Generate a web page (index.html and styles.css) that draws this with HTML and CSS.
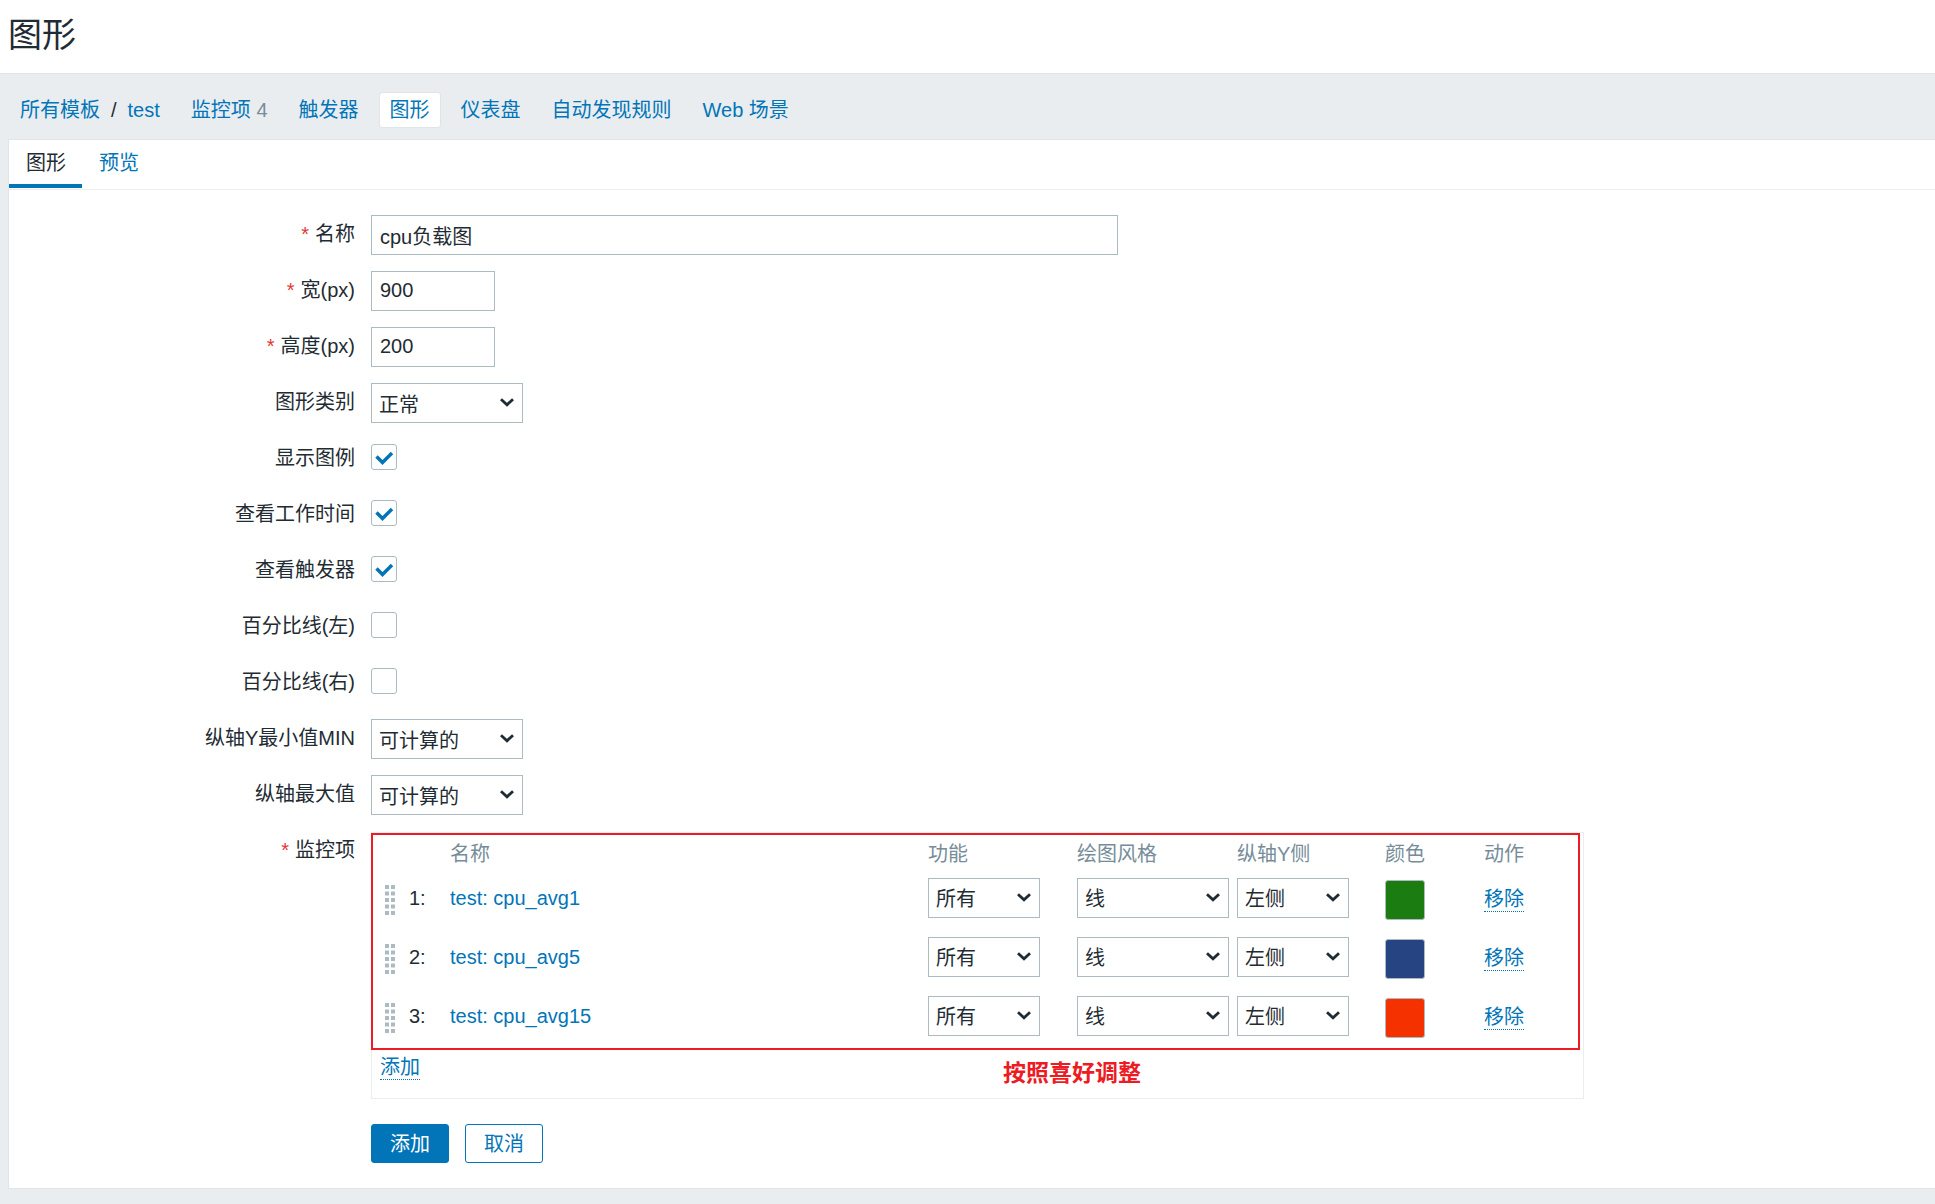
FILE: index.html
```html
<!DOCTYPE html>
<html lang="zh-CN">
<head>
<meta charset="utf-8">
<title>图形</title>
<link rel="stylesheet" href="styles.css">
</head>
<body>
<header class="page-header"><h1>图形</h1></header>

<nav class="object-nav" aria-label="模板">
  <div class="nav-item breadcrumb"><a href="#">所有模板</a><span>/</span><a href="#">test</a></div>
  <div class="nav-item"><a href="#">监控项</a> <span class="count">4</span></div>
  <div class="nav-item"><a href="#">触发器</a></div>
  <div class="nav-item selected"><a href="#" aria-current="page">图形</a></div>
  <div class="nav-item"><a href="#">仪表盘</a></div>
  <div class="nav-item"><a href="#">自动发现规则</a></div>
  <div class="nav-item"><a href="#">Web 场景</a></div>
</nav>

<main class="panel">
  <div class="tabs">
    <a class="tab active" href="#">图形</a>
    <a class="tab" href="#">预览</a>
  </div>

  <form class="graph-form">
    <div class="row"><label class="required" for="name">名称</label><input class="text wide" id="name" type="text" value="cpu负载图"></div>
    <div class="row"><label class="required" for="width">宽(px)</label><input class="text number" id="width" type="text" value="900"></div>
    <div class="row"><label class="required" for="height">高度(px)</label><input class="text number" id="height" type="text" value="200"></div>
    <div class="row"><label for="type">图形类别</label><select class="medium" id="type"><option>正常</option></select></div>
    <div class="row"><label for="legend">显示图例</label><input class="check" id="legend" type="checkbox" checked></div>
    <div class="row"><label for="worktime">查看工作时间</label><input class="check" id="worktime" type="checkbox" checked></div>
    <div class="row"><label for="triggers">查看触发器</label><input class="check" id="triggers" type="checkbox" checked></div>
    <div class="row"><label for="pleft">百分比线(左)</label><input class="check" id="pleft" type="checkbox"></div>
    <div class="row"><label for="pright">百分比线(右)</label><input class="check" id="pright" type="checkbox"></div>
    <div class="row"><label for="ymin">纵轴Y最小值MIN</label><select class="medium" id="ymin"><option>可计算的</option></select></div>
    <div class="row"><label for="ymax">纵轴最大值</label><select class="medium" id="ymax"><option>可计算的</option></select></div>
    <div class="row">
      <span class="label required">监控项</span>
      <div class="items">
        <table>
          <colgroup><col class="c-drag"><col class="c-num"><col><col class="c-func"><col class="c-style"><col class="c-side"><col class="c-color"><col class="c-action"></colgroup>
          <thead>
            <tr><th></th><th></th><th>名称</th><th>功能</th><th>绘图风格</th><th>纵轴Y侧</th><th>颜色</th><th>动作</th></tr>
          </thead>
          <tbody>
            <tr>
              <td class="drag"><svg width="10" height="30" viewBox="0 0 10 30"><path d="M2 0v30M8 0v30"/></svg></td>
              <td>1:</td><td><a href="#">test: cpu_avg1</a></td>
              <td><select class="small" aria-label="功能"><option>所有</option></select></td>
              <td><select class="medium" aria-label="绘图风格"><option>线</option></select></td>
              <td><select class="small" aria-label="纵轴Y侧"><option>左侧</option></select></td>
              <td class="color"><button type="button" class="swatch green" aria-label="颜色"></button></td>
              <td class="action"><button type="button" class="link">移除</button></td>
            </tr>
            <tr>
              <td class="drag"><svg width="10" height="30" viewBox="0 0 10 30"><path d="M2 0v30M8 0v30"/></svg></td>
              <td>2:</td><td><a href="#">test: cpu_avg5</a></td>
              <td><select class="small" aria-label="功能"><option>所有</option></select></td>
              <td><select class="medium" aria-label="绘图风格"><option>线</option></select></td>
              <td><select class="small" aria-label="纵轴Y侧"><option>左侧</option></select></td>
              <td class="color"><button type="button" class="swatch blue" aria-label="颜色"></button></td>
              <td class="action"><button type="button" class="link">移除</button></td>
            </tr>
            <tr>
              <td class="drag"><svg width="10" height="30" viewBox="0 0 10 30"><path d="M2 0v30M8 0v30"/></svg></td>
              <td>3:</td><td><a href="#">test: cpu_avg15</a></td>
              <td><select class="small" aria-label="功能"><option>所有</option></select></td>
              <td><select class="medium" aria-label="绘图风格"><option>线</option></select></td>
              <td><select class="small" aria-label="纵轴Y侧"><option>左侧</option></select></td>
              <td class="color"><button type="button" class="swatch red" aria-label="颜色"></button></td>
              <td class="action"><button type="button" class="link">移除</button></td>
            </tr>
          </tbody>
          <tfoot><tr><td colspan="8"><button type="button" class="link">添加</button></td></tr></tfoot>
        </table>
        <div class="highlight"></div>
        <p class="note">按照喜好调整</p>
      </div>
    </div>
    <div class="actions">
      <button type="submit" class="btn primary">添加</button>
      <button type="button" class="btn">取消</button>
    </div>
  </form>
</main>
</body>
</html>
```
FILE: styles.css
```css
* { box-sizing: border-box; }

body {
  margin: 0;
  background: #e9edf0;
  color: #1f2c33;
  font: 20px/28px "Liberation Sans", Arial, "Noto Sans CJK SC", sans-serif;
}

a { color: #0275b8; text-decoration: none; }

button, input, select { font: inherit; color: inherit; margin: 0; }

.page-header {
  padding: 10px 8px 13px;
  background: #fff;
  border-bottom: 1px solid #dfe4e7;
}

h1 { margin: 0; font-size: 34px; line-height: 50px; font-weight: 400; }

.object-nav { display: flex; gap: 9px; padding: 18px 9px 11px; }

.nav-item {
  padding: 3px 10px;
  border: 1px solid transparent;
  border-radius: 3px;
  white-space: nowrap;
}

.nav-item.selected { background: #fff; border-color: #dfe4e7; }
.breadcrumb { display: flex; gap: 11px; }
.count { color: #768d99; }

.panel {
  margin-left: 8px;
  background: #fff;
  border: 1px solid #dfe4e7;
  border-right: 0;
}

.tabs { display: flex; border-bottom: 1px solid #ebeef0; }

.tab { padding: 9px 16px 11px 17px; }

.tab.active {
  padding-bottom: 7px;
  margin-bottom: 1px;
  color: #1f2c33;
  border-bottom: 4px solid #0275b8;
}

.graph-form { display: grid; gap: 16px; padding: 25px 0; }

.row {
  display: grid;
  grid-template-columns: 346px minmax(0, 1fr);
  column-gap: 16px;
  align-items: start;
  justify-items: start;
  min-height: 40px;
}

.row > label, .label { justify-self: end; padding: 5px 0 3px; }
.required::before { content: "*"; margin-right: 6px; color: #e33734; }

.text, select {
  height: 40px;
  background: #fff;
  border: 1px solid #acbbc2;
  border-radius: 0;
}

.text { width: 124px; padding: 0 8px; }
.number { padding-bottom: 2px; }
.wide { width: 747px; max-width: 100%; }

select {
  appearance: none;
  display: block;
  padding: 3px 28px 0 7px;
  background: #fff url("data:image/svg+xml,%3Csvg xmlns='http://www.w3.org/2000/svg' width='14' height='9' viewBox='0 0 14 9'%3E%3Cpath d='M1 1.200l6 5.600 6-5.600' fill='none' stroke='%231f2c33' stroke-width='2.800'/%3E%3C/svg%3E") no-repeat right 8px top 14px;
}

.medium { width: 152px; }
.small { width: 112px; }

.check {
  appearance: none;
  width: 26px;
  height: 26px;
  margin-top: 5px;
  border: 1px solid #acbbc2;
  border-radius: 3px;
}

.check:checked {
  background: url("data:image/svg+xml,%3Csvg xmlns='http://www.w3.org/2000/svg' width='24' height='24' viewBox='0 0 24 24'%3E%3Cpath d='M4.500 11.500l6 6 9.500-9.500' fill='none' stroke='%230275b8' stroke-width='3.500'/%3E%3C/svg%3E") no-repeat center;
}

.items {
  position: relative;
  width: 1213px;
  margin-top: 1px;
  border: 1px solid #ebeef0;
}

table { width: 100%; table-layout: fixed; border-collapse: collapse; }
th, td { padding: 0 0 0 8px; text-align: left; font-weight: 400; }
th { height: 35px; padding-top: 6px; line-height: 24px; color: #768d99; }
tbody td { height: 59px; }
tfoot td { height: 53px; padding-bottom: 8px; }

.c-drag { width: 29px; }
.c-num { width: 41px; }
.c-func { width: 149px; }
.c-style { width: 160px; }
.c-side { width: 148px; }
.c-color { width: 99px; }
.c-action { width: 107px; }

.drag { padding: 4px 0 0 13px; }
.drag svg { display: block; }
.drag path { stroke: #acbbc2; stroke-width: 4; stroke-dasharray: 4 2.5; }
.color { padding-top: 4px; }
.action { padding-top: 4px; }

.swatch {
  display: block;
  width: 40px;
  height: 40px;
  padding: 0;
  border: 1px solid #acbbc2;
  border-radius: 3px;
}

.green { background: #1a7c11; }
.blue { background: #274482; }
.red { background: #f63100; }

.link {
  display: block;
  padding: 0;
  background: none;
  border: 0;
  border-bottom: 1px dotted #0275b8;
  color: #0275b8;
  line-height: 24px;
}

.highlight {
  position: absolute;
  top: 0;
  left: -1px;
  width: 1209px;
  height: 217px;
  border: 2px solid #ed1c24;
  pointer-events: none;
}

.note {
  position: absolute;
  top: 226px;
  left: 631px;
  margin: 0;
  color: #ed1c24;
  font-size: 23px;
  font-weight: 700;
}

.actions { display: flex; gap: 16px; margin-top: 9px; padding-left: 362px; }

.btn {
  width: 78px;
  height: 39px;
  padding: 0;
  background: #fff;
  border: 1px solid #0275b8;
  border-radius: 3px;
  color: #0275b8;
}

.primary { background: #0275b8; color: #fff; }
```
